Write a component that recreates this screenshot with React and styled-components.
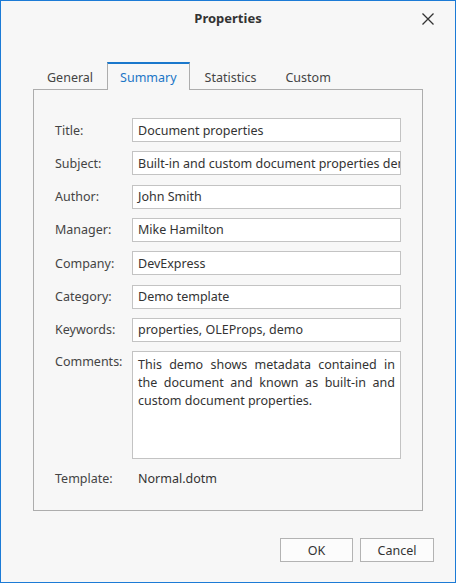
import React from 'react';
import styled, { createGlobalStyle } from 'styled-components';

const GlobalStyle = createGlobalStyle`
    html, body {
        margin: 0;
        padding: 0;
        background: #f7f7f7;
    }
    * {
        box-sizing: border-box;
    }
`;

const Frame = styled.div`
    width: 456px;
    height: 583px;
    border: 1px solid #1c7bd6;
    background: #f7f7f7;
    display: flex;
    flex-direction: column;
    font-family: "Noto Sans", "Open Sans", sans-serif;
    font-size: 12.5px;
    color: #3c3c3c;
`;

const TitleBar = styled.div`
    position: relative;
    height: 34px;
    display: flex;
    align-items: center;
    justify-content: center;
`;

const Title = styled.span`
    font-weight: 700;
    font-size: 13px;
    color: #333;
`;

const CloseButton = styled.button`
    position: absolute;
    right: 16px;
    top: 7px;
    width: 22px;
    height: 22px;
    padding: 0;
    border: none;
    background: transparent;
    display: flex;
    align-items: center;
    justify-content: center;
`;

const Body = styled.div`
    display: flex;
    flex-direction: column;
    padding: 27px 32px 0 32px;
`;

const TabStrip = styled.div`
    display: flex;
    align-items: flex-end;
    height: 27px;
    position: relative;
    z-index: 1;
`;

const Tab = styled.div`
    height: ${p => (p.$active ? '28px' : '26px')};
    padding: 0 ${p => p.$pad}px;
    display: flex;
    align-items: center;
    padding-top: ${p => (p.$active ? '0' : '1px')};
    color: ${p => (p.$active ? '#1b75c6' : '#444')};
    background: #f7f7f7;
    border-top: ${p => (p.$active ? '2px solid #1a78cc' : '2px solid transparent')};
    border-left: 1px solid ${p => (p.$active ? '#adadad' : 'transparent')};
    border-right: 1px solid ${p => (p.$active ? '#adadad' : 'transparent')};
    margin-bottom: ${p => (p.$active ? '-1px' : '0')};
`;

const Panel = styled.div`
    height: 422px;
    border: 1px solid #adadad;
    padding: 28px 21px 0 21px;
    display: flex;
    flex-direction: column;
    gap: 9.33px;
`;

const Row = styled.div`
    display: flex;
    align-items: ${p => (p.$top ? 'flex-start' : 'center')};
`;

const Label = styled.span`
    width: 77px;
    flex-shrink: 0;
    color: #444;
    padding-top: ${p => (p.$top ? '2px' : '0')};
`;

const Field = styled.div`
    flex: 1;
    height: 24px;
    border: 1px solid #c3c3c3;
    background: #fff;
    padding: 0 5px;
    display: flex;
    align-items: center;
    white-space: nowrap;
    overflow: hidden;
    color: #333;
`;

const Memo = styled.div`
    flex: 1;
    height: 107.5px;
    border: 1px solid #c3c3c3;
    background: #fff;
    padding: 4px 5px 0 5px;
    line-height: 18px;
    text-align: justify;
    color: #333;
`;

const Value = styled.span`
    padding-left: 6px;
    color: #333;
`;

const TemplateRow = styled(Row)`
    height: 20px;
`;

const Footer = styled.div`
    display: flex;
    justify-content: flex-end;
    gap: 7px;
    padding: 27px 21px 0 0;
`;

const Button = styled.button`
    width: ${p => p.$w}px;
    height: 24px;
    border: 1px solid #b3b3b3;
    background: #fcfcfc;
    font-family: inherit;
    font-size: 12.5px;
    color: #333;
    padding: 0;
`;

const fields = [
    ['Title:', 'Document properties'],
    ['Subject:', 'Built-in and custom document properties demo'],
    ['Author:', 'John Smith'],
    ['Manager:', 'Mike Hamilton'],
    ['Company:', 'DevExpress'],
    ['Category:', 'Demo template'],
    ['Keywords:', 'properties, OLEProps, demo'],
];

const tabs = [
    ['General', 13],
    ['Summary', 12],
    ['Statistics', 14],
    ['Custom', 13],
];

const App = () => {
    return (
        <Frame>
            <GlobalStyle />
            <TitleBar>
                <Title>Properties</Title>
                <CloseButton>
                    <svg width="12" height="12" viewBox="0 0 12 12">
                        <path d="M0.5 0.5 L11.5 11.5 M11.5 0.5 L0.5 11.5" stroke="#333" strokeWidth="1.3" fill="none" />
                    </svg>
                </CloseButton>
            </TitleBar>
            <Body>
                <TabStrip>
                    {tabs.map(([name, pad]) => (
                        <Tab key={name} $pad={pad} $active={name === 'Summary'}>{name}</Tab>
                    ))}
                </TabStrip>
                <Panel>
                    {fields.map(([label, value]) => (
                        <Row key={label}>
                            <Label>{label}</Label>
                            <Field>{value}</Field>
                        </Row>
                    ))}
                    <Row $top>
                        <Label $top>Comments:</Label>
                        <Memo>
                            This demo shows metadata contained in the document and known as built-in and custom document properties.
                        </Memo>
                    </Row>
                    <TemplateRow>
                        <Label>Template:</Label>
                        <Value>Normal.dotm</Value>
                    </TemplateRow>
                </Panel>
            </Body>
            <Footer>
                <Button $w={73}>OK</Button>
                <Button $w={74}>Cancel</Button>
            </Footer>
        </Frame>
    );
};

export default App;
